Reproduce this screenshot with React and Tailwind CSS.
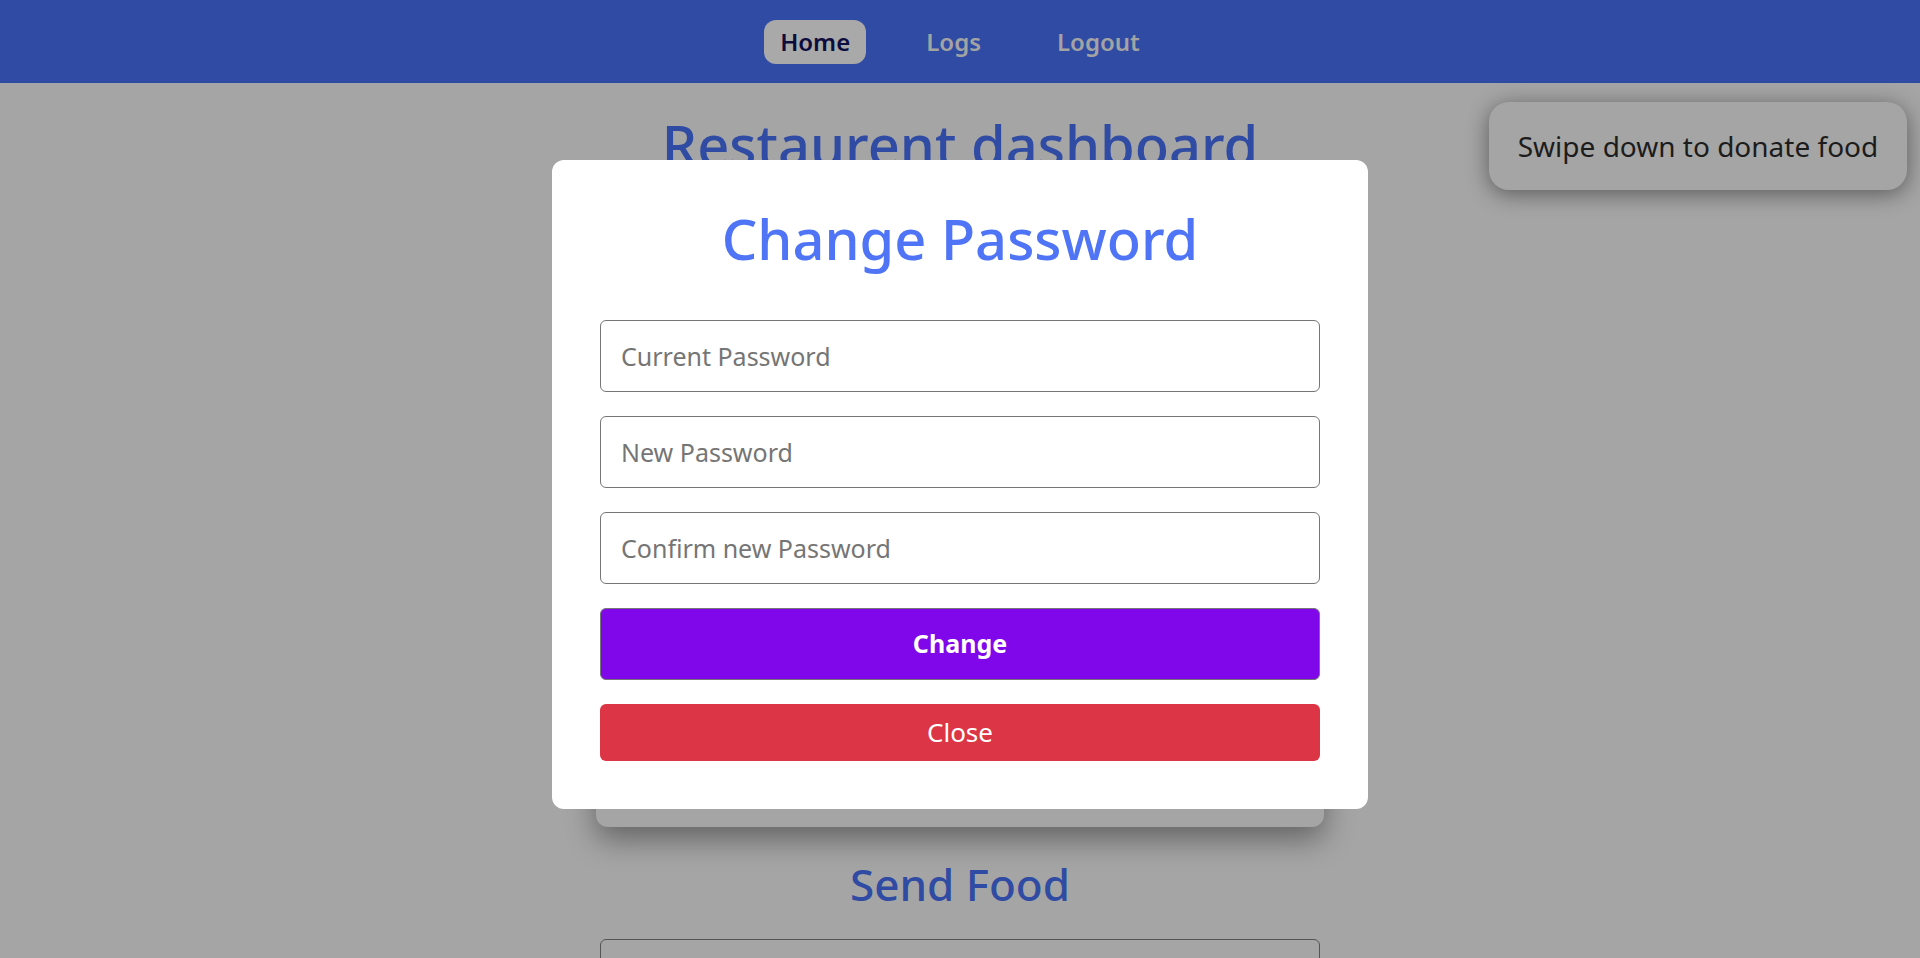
import React from 'react';

const NavItem = ({ label, active }) => (
    <button
        className={`px-4 h-[44px] rounded-xl text-[24px] font-semibold ${
            active ? 'bg-[#a9a9a9] text-[#0c0c3e]' : 'text-[#a3a3a3]'
        }`}
    >
        {label}
    </button>
);

const PasswordInput = ({ placeholder }) => (
    <input
        type="password"
        placeholder={placeholder}
        className="w-full h-[72px] px-5 rounded-md border border-[#767676] bg-white text-[25px] text-[#222] placeholder:text-[#757575] outline-none"
    />
);

export default function App() {
    return (
        <div className="h-screen overflow-hidden bg-[#a5a5a5] font-['Noto_Sans',sans-serif] relative">
            {/* top nav */}
            <nav className="h-[83px] bg-[#2f4ba3] flex items-center justify-center gap-[44px]">
                <NavItem label="Home" active />
                <NavItem label="Logs" />
                <NavItem label="Logout" />
            </nav>

            {/* dashboard behind the overlay */}
            <main className="flex flex-col items-center pt-[28px]">
                <h1 className="text-[56px] leading-[67px] font-medium text-[#2f4ba3]">Restaurent dashboard</h1>
                <div className="mt-[6px] w-[728px] h-[643px] rounded-xl bg-[#a5a5a5] shadow-[0_12px_30px_rgba(0,0,0,0.4)]"></div>
                <h2 className="mt-[31px] text-[44px] leading-[53px] font-medium text-[#2f4ba3]">Send Food</h2>
                <div className="mt-[28px] w-[720px] h-[72px] rounded-md border border-[#555]"></div>
            </main>

            {/* toast */}
            <div className="absolute top-[102px] right-[13px] w-[418px] h-[88px] rounded-[20px] bg-[#a5a5a5] shadow-[0_4px_22px_rgba(0,0,0,0.45)] flex items-center justify-center px-4">
                <span className="text-[28px] text-[#1c1c1c] whitespace-nowrap">Swipe down to donate food</span>
            </div>

            {/* modal */}
            <div className="absolute top-[160px] left-1/2 -translate-x-1/2 w-[816px] rounded-xl bg-white px-12 pt-[45px] pb-12">
                <h2 className="text-center text-[56px] leading-[67px] font-medium text-[#4f74f5]">Change Password</h2>
                <div className="mt-12 flex flex-col gap-6">
                    <PasswordInput placeholder="Current Password" />
                    <PasswordInput placeholder="New Password" />
                    <PasswordInput placeholder="Confirm new Password" />
                    <button className="w-full h-[72px] rounded-md border border-[#767676] bg-[#8007ea] text-white text-[25px] font-bold">
                        Change
                    </button>
                    <button className="w-full h-[57px] rounded-md bg-[#dc3545] text-white text-[26px]">
                        Close
                    </button>
                </div>
            </div>
        </div>
    );
}
